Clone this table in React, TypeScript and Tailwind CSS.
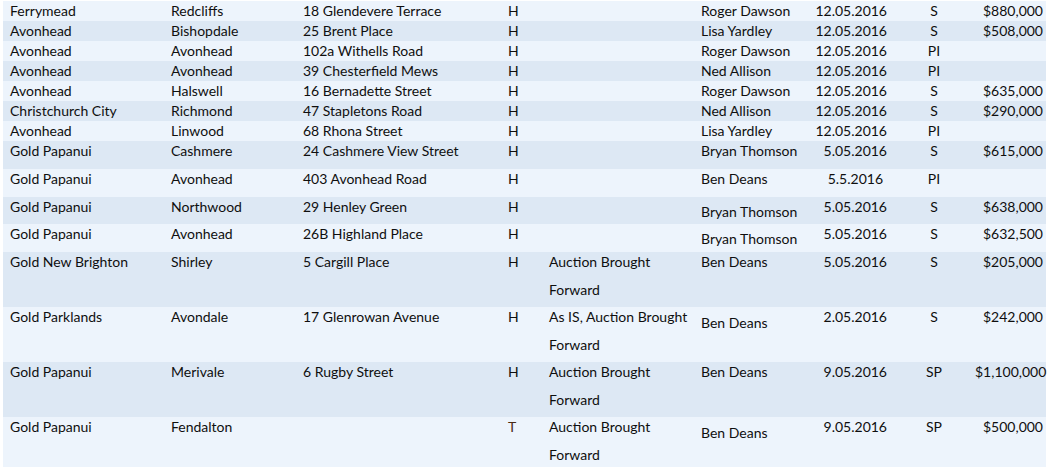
import React from "react";

type Row = {
  c: string[];
  h: number;
  notes?: string[];
  agentOff?: number;
  dateRightPad?: boolean;
  typeColor?: string;
};

const rows: Row[] = [
  { c: ["Ferrymead", "Redcliffs", "18 Glendevere Terrace", "H", "", "Roger Dawson", "12.05.2016", "S", "$880,000"], h: 20 },
  { c: ["Avonhead", "Bishopdale", "25 Brent Place", "H", "", "Lisa Yardley", "12.05.2016", "S", "$508,000"], h: 20 },
  { c: ["Avonhead", "Avonhead", "102a Withells Road", "H", "", "Roger Dawson", "12.05.2016", "PI", ""], h: 20 },
  { c: ["Avonhead", "Avonhead", "39 Chesterfield Mews", "H", "", "Ned Allison", "12.05.2016", "PI", ""], h: 20 },
  { c: ["Avonhead", "Halswell", "16 Bernadette Street", "H", "", "Roger Dawson", "12.05.2016", "S", "$635,000"], h: 20 },
  { c: ["Christchurch City", "Richmond", "47 Stapletons Road", "H", "", "Ned Allison", "12.05.2016", "S", "$290,000"], h: 20 },
  { c: ["Avonhead", "Linwood", "68 Rhona Street", "H", "", "Lisa Yardley", "12.05.2016", "PI", ""], h: 20 },
  { c: ["Gold Papanui", "Cashmere", "24 Cashmere View Street", "H", "", "Bryan Thomson", "5.05.2016", "S", "$615,000"], h: 28 },
  { c: ["Gold Papanui", "Avonhead", "403 Avonhead Road", "H", "", "Ben Deans", "5.5.2016", "PI", ""], h: 28, dateRightPad: true },
  { c: ["Gold Papanui", "Northwood", "29 Henley Green", "H", "", "Bryan Thomson", "5.05.2016", "S", "$638,000"], h: 27, agentOff: 5 },
  { c: ["Gold Papanui", "Avonhead", "26B Highland Place", "H", "", "Bryan Thomson", "5.05.2016", "S", "$632,500"], h: 28, agentOff: 5 },
  { c: ["Gold New Brighton", "Shirley", "5 Cargill Place", "H", "", "Ben Deans", "5.05.2016", "S", "$205,000"], h: 55, notes: ["Auction Brought", "Forward"] },
  { c: ["Gold Parklands", "Avondale", "17 Glenrowan Avenue", "H", "", "Ben Deans", "2.05.2016", "S", "$242,000"], h: 55, notes: ["As IS, Auction Brought", "Forward"], agentOff: 6 },
  { c: ["Gold Papanui", "Merivale", "6 Rugby Street", "H", "", "Ben Deans", "9.05.2016", "SP", "$1,100,000"], h: 55, notes: ["Auction Brought", "Forward"] },
  { c: ["Gold Papanui", "Fendalton", "", "T", "", "Ben Deans", "9.05.2016", "SP", "$500,000"], h: 50, notes: ["Auction Brought", "Forward"], agentOff: 6, typeColor: "text-[#4a2a14]" },
];

export default function App() {
  return (
    <div
      className="w-[1049px] h-[467px] overflow-hidden bg-white pt-[1px] pl-[3px] text-[14px] leading-[20px] text-[#0f0f0f]"
      style={{ fontFamily: "Lato, 'Liberation Sans', sans-serif" }}
    >
      <div className="w-[1043px]">
        {rows.map((r, i) => (
          <div
            key={i}
            className={`grid grid-cols-[161px_132px_205px_41px_152px_118px_81px_82px_71px] ${i % 2 === 0 ? "bg-[#edf4fc]" : "bg-[#dde8f4]"}`}
            style={{ height: r.h }}
          >
            <div className="pl-[7px] whitespace-nowrap">{r.c[0]}</div>
            <div className="pl-[7px] whitespace-nowrap">{r.c[1]}</div>
            <div className="pl-[7px] whitespace-nowrap">{r.c[2]}</div>
            <div className={`pl-[7px] ${r.typeColor ?? ""}`}>{r.c[3]}</div>
            <div className="pl-[7px] whitespace-nowrap">
              {r.notes ? (
                <>
                  <div>{r.notes[0]}</div>
                  <div className="mt-[8px]">{r.notes[1]}</div>
                </>
              ) : null}
            </div>
            <div className="pl-[7px] whitespace-nowrap" style={r.agentOff ? { paddingTop: r.agentOff } : undefined}>
              {r.c[5]}
            </div>
            <div className={`text-right whitespace-nowrap ${r.dateRightPad ? "pr-[10px]" : "pr-[6px]"}`}>{r.c[6]}</div>
            <div className="text-center">{r.c[7]}</div>
            <div className="text-right pr-[3px] whitespace-nowrap">{r.c[8]}</div>
          </div>
        ))}
      </div>
    </div>
  );
}
